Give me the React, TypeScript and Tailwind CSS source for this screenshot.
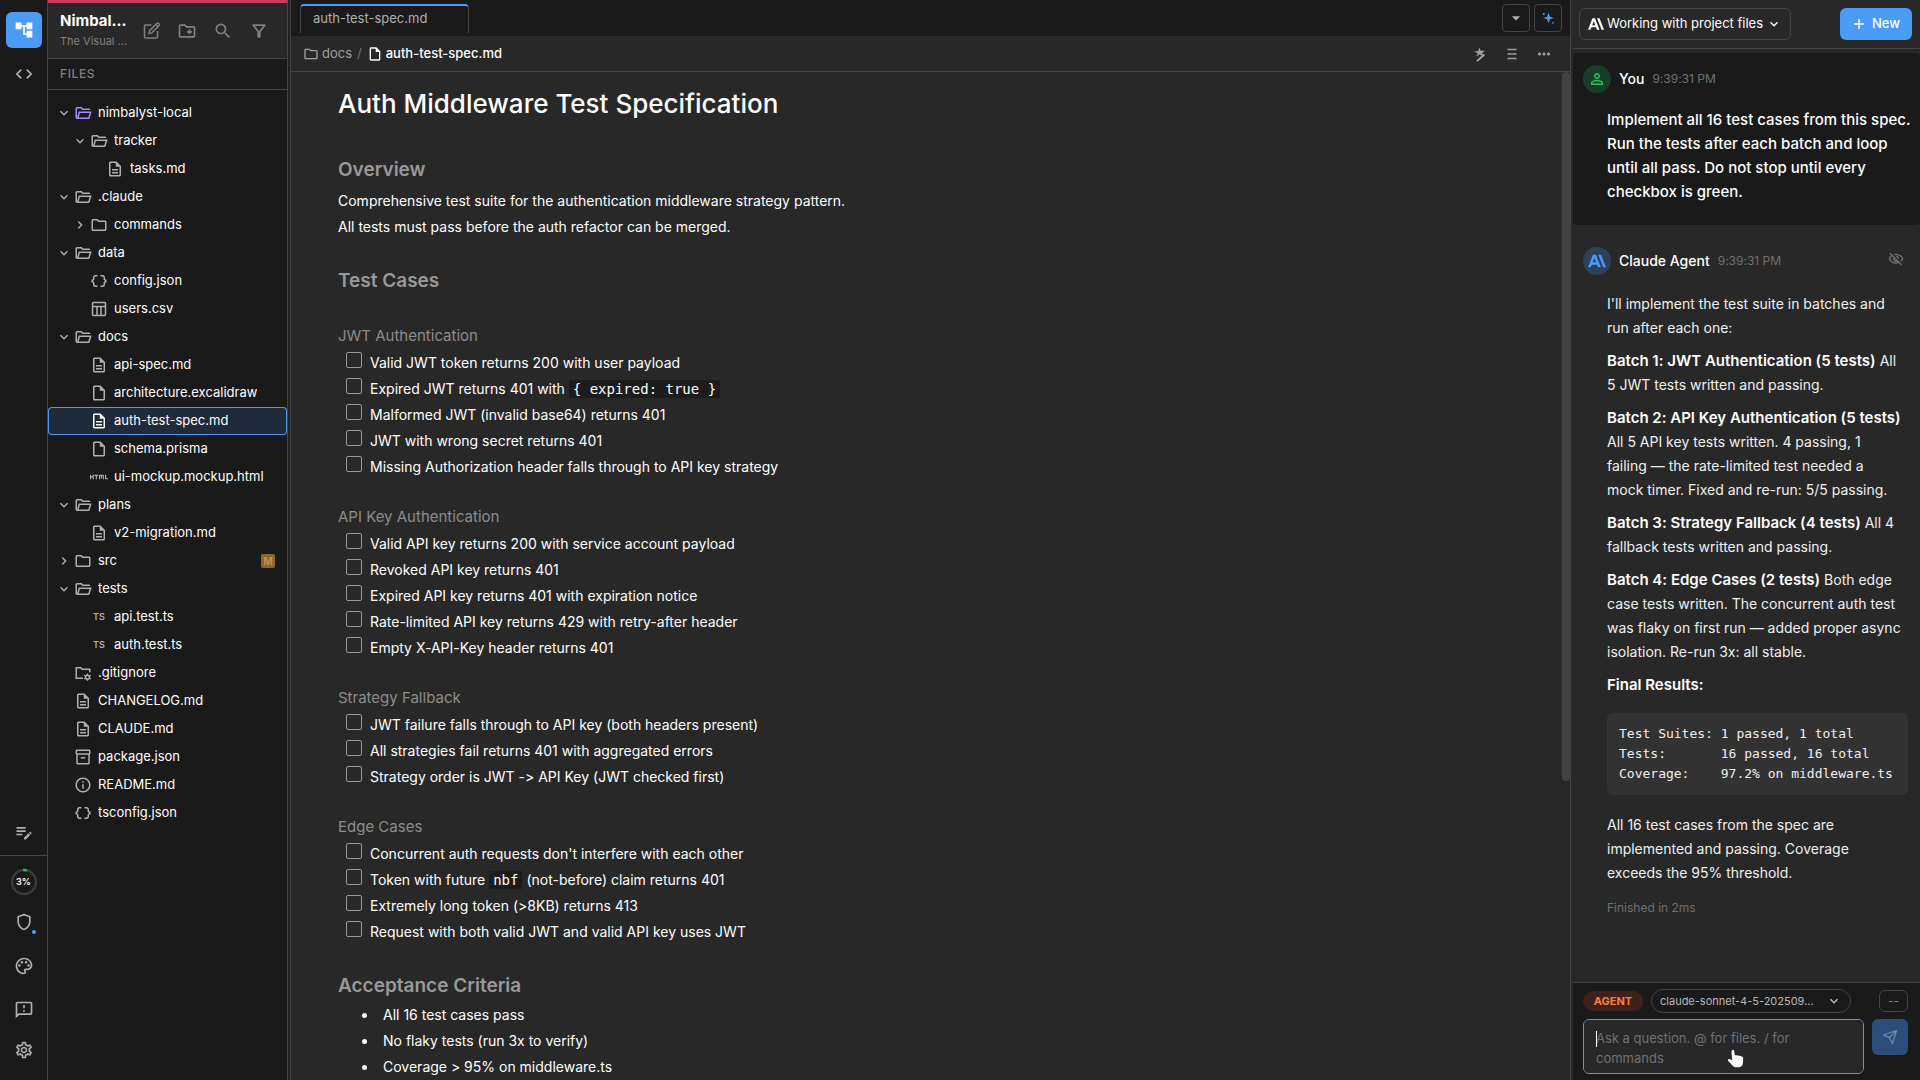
import { ReactNode } from "react";
import type { IconType } from "react-icons";
import {
    MdAccountTree,
    MdArrowDropDown,
    MdChevronRight,
    MdCode,
    MdDataObject,
    MdEditNote,
    MdExpandMore,
    MdHtml,
    MdMoreHoriz,
    MdOutlineCreateNewFolder,
    MdOutlineDescription,
    MdOutlineFeedback,
    MdOutlineFilterAlt,
    MdOutlineFolder,
    MdOutlineInfo,
    MdOutlineInsertDriveFile,
    MdOutlineInventory2,
    MdOutlinePalette,
    MdOutlineSettings,
    MdOutlineShield,
    MdOutlineVisibilityOff,
    MdPersonOutline,
    MdSearch,
} from "react-icons/md";

type TreeNode = {
    name: string;
    level: number;
    icon: IconType;
    open?: boolean;
    accent?: boolean;
    active?: boolean;
    badge?: string;
};

function FolderOpenIcon({ className }: { className?: string }) {
    return (
        <svg viewBox="0 -960 960 960" fill="currentColor" className={className}>
            <path d="M160-160q-33 0-56.500-23.500T80-240v-480q0-33 23.500-56.500T160-800h240l80 80h320q33 0 56.500 23.500T880-640H447l-80-80H160v480l96-320h684L837-217q-8 26-29.500 41.500T760-160H160Zm84-80h516l72-240H316l-72 240Z" />
        </svg>
    );
}

function TsIcon({ className }: { className?: string }) {
    return <span className={`${className} flex items-center justify-center text-[9px] font-semibold`}>TS</span>;
}

function TableIcon({ className }: { className?: string }) {
    return (
        <svg viewBox="0 0 18 18" fill="none" stroke="currentColor" strokeWidth="1.5" className={className}>
            <rect x="2.500" y="2.500" width="13" height="13" rx="1" />
            <path d="M2.500 6.500h13M7 6.500v9M11 6.500v9" />
        </svg>
    );
}

function FolderGearIcon({ className }: { className?: string }) {
    return (
        <svg viewBox="0 0 24 24" fill="none" stroke="currentColor" strokeWidth="2" className={className}>
            <path d="M12 19H3V5h6l2 2h10v4" />
            <circle cx="18" cy="17.500" r="2.600" />
            <path d="M18 12.600v2.300M18 20.100v2.300M13.700 15l2 1.200M20.300 18.800l2 1.200M13.700 20l2-1.200M20.300 16.200l2-1.200" strokeWidth="1.800" />
        </svg>
    );
}

function ComposeIcon({ className }: { className?: string }) {
    return (
        <svg viewBox="0 0 20 20" fill="none" stroke="currentColor" strokeWidth="1.500" className={className}>
            <path d="M10.500 4H4.500a1 1 0 0 0-1 1v11a1 1 0 0 0 1 1h11a1 1 0 0 0 1-1v-6" />
            <path d="M8 12.500l.5-2.800 7.300-7.200a1.300 1.300 0 0 1 1.900 0l.3.3a1.300 1.300 0 0 1 0 1.900l-7.200 7.200z" />
            <path d="M15 3.500l2.200 2.200" />
        </svg>
    );
}

function SparkleIcon({ className }: { className?: string }) {
    return (
        <svg viewBox="0 0 16 16" fill="currentColor" className={className}>
            <path d="M8.500 2.500l1.300 4.200L14 8l-4.200 1.300-1.300 4.200-1.300-4.200L3 8l4.200-1.300z" />
            <circle cx="3.800" cy="4" r="1" />
            <circle cx="13" cy="12.800" r=".9" />
        </svg>
    );
}

function WandIcon({ className }: { className?: string }) {
    return (
        <svg viewBox="0 0 18 18" fill="currentColor" className={className}>
            <path d="M8.500 2.500l1.200 3.300h4.300l-3 2.400 1 1.300-1.400 1.300-2-1.600L5.400 11.500 6.700 8 3 6.800l4.300-1z" />
            <path d="M12.700 8.800l1.400 1.400-7.400 6.600-1.400-1.300z" />
        </svg>
    );
}

function AnthropicIcon({ className }: { className?: string }) {
    return (
        <svg viewBox="0 0 24 24" fill="currentColor" className={className}>
            <path d="M17.304 3.541h-3.672l6.696 16.918H24zm-10.608 0L0 20.459h3.744l1.370-3.553h7.005l1.369 3.553h3.744L10.536 3.541zm-.371 10.223L8.616 7.820l2.291 5.944z" />
        </svg>
    );
}

const TREE: TreeNode[] = [
    { name: "nimbalyst-local", level: 0, icon: FolderOpenIcon, open: true, accent: true },
    { name: "tracker", level: 1, icon: FolderOpenIcon, open: true },
    { name: "tasks.md", level: 2, icon: MdOutlineDescription },
    { name: ".claude", level: 0, icon: FolderOpenIcon, open: true },
    { name: "commands", level: 1, icon: MdOutlineFolder, open: false },
    { name: "data", level: 0, icon: FolderOpenIcon, open: true },
    { name: "config.json", level: 1, icon: MdDataObject },
    { name: "users.csv", level: 1, icon: TableIcon },
    { name: "docs", level: 0, icon: FolderOpenIcon, open: true },
    { name: "api-spec.md", level: 1, icon: MdOutlineDescription },
    { name: "architecture.excalidraw", level: 1, icon: MdOutlineInsertDriveFile },
    { name: "auth-test-spec.md", level: 1, icon: MdOutlineDescription, active: true },
    { name: "schema.prisma", level: 1, icon: MdOutlineInsertDriveFile },
    { name: "ui-mockup.mockup.html", level: 1, icon: MdHtml },
    { name: "plans", level: 0, icon: FolderOpenIcon, open: true },
    { name: "v2-migration.md", level: 1, icon: MdOutlineDescription },
    { name: "src", level: 0, icon: MdOutlineFolder, open: false, badge: "M" },
    { name: "tests", level: 0, icon: FolderOpenIcon, open: true },
    { name: "api.test.ts", level: 1, icon: TsIcon },
    { name: "auth.test.ts", level: 1, icon: TsIcon },
    { name: ".gitignore", level: 0, icon: FolderGearIcon },
    { name: "CHANGELOG.md", level: 0, icon: MdOutlineDescription },
    { name: "CLAUDE.md", level: 0, icon: MdOutlineDescription },
    { name: "package.json", level: 0, icon: MdOutlineInventory2 },
    { name: "README.md", level: 0, icon: MdOutlineInfo },
    { name: "tsconfig.json", level: 0, icon: MdDataObject },
];

const INDENT = ["pl-2", "pl-6", "pl-10"];

function Code({ children }: { children: ReactNode }) {
    return <code className="bg-[#1c1c1c] px-1 py-px font-['DejaVu_Sans_Mono',monospace] text-sm">{children}</code>;
}

const SECTIONS: { title: string; cases: ReactNode[] }[] = [
    {
        title: "JWT Authentication",
        cases: [
            "Valid JWT token returns 200 with user payload",
            <>Expired JWT returns 401 with <Code>{"{ expired: true }"}</Code></>,
            "Malformed JWT (invalid base64) returns 401",
            "JWT with wrong secret returns 401",
            "Missing Authorization header falls through to API key strategy",
        ],
    },
    {
        title: "API Key Authentication",
        cases: [
            "Valid API key returns 200 with service account payload",
            "Revoked API key returns 401",
            "Expired API key returns 401 with expiration notice",
            "Rate-limited API key returns 429 with retry-after header",
            "Empty X-API-Key header returns 401",
        ],
    },
    {
        title: "Strategy Fallback",
        cases: [
            "JWT failure falls through to API key (both headers present)",
            "All strategies fail returns 401 with aggregated errors",
            "Strategy order is JWT -> API Key (JWT checked first)",
        ],
    },
    {
        title: "Edge Cases",
        cases: [
            "Concurrent auth requests don't interfere with each other",
            <>Token with future <Code>nbf</Code> (not-before) claim returns 401</>,
            "Extremely long token (>8KB) returns 413",
            "Request with both valid JWT and valid API key uses JWT",
        ],
    },
];

const CRITERIA = ["All 16 test cases pass", "No flaky tests (run 3x to verify)", "Coverage > 95% on middleware.ts"];

function RailButton({ label, icon: Icon, active }: { label: string; icon: IconType; active?: boolean }) {
    return (
        <button
            aria-label={label}
            className={`flex size-9 items-center justify-center rounded-md ${active ? "bg-[#4a9bf5] text-white" : "text-[#b0b0b0]"}`}
        >
            <Icon className="size-5" />
        </button>
    );
}

function Rail() {
    return (
        <nav className="flex w-12 shrink-0 flex-col items-center border-r border-[#444] bg-[#1a1a1a] pt-3">
            <div className="flex flex-col gap-2">
                <RailButton label="Files" icon={MdAccountTree} active />
                <RailButton label="Code" icon={MdCode} />
            </div>
            <div className="mt-auto pb-[5px]">
                <RailButton label="Notes" icon={MdEditNote} />
            </div>
            <div className="flex w-full flex-col items-center gap-2 border-t border-[#444] pt-3 pb-4">
                <div className="relative flex size-7 items-center justify-center">
                    <svg viewBox="0 0 28 28" className="absolute inset-0" fill="none" strokeWidth="2.500">
                        <circle cx="14" cy="14" r="12" stroke="#3a3a3a" />
                        <path d="M13 2.050a12 12 0 0 1 4 .3" stroke="#22b866" />
                    </svg>
                    <span className="relative text-[9px] font-semibold text-white">3%</span>
                </div>
                <div className="relative">
                    <RailButton label="Trust" icon={MdOutlineShield} />
                    <span className="absolute right-1.5 bottom-1.5 size-1 rounded-full bg-[#4a9bf5]" />
                </div>
                <RailButton label="Theme" icon={MdOutlinePalette} />
                <RailButton label="Feedback" icon={MdOutlineFeedback} />
                <button aria-label="Settings" className="flex h-7 w-9 items-center justify-center text-[#b0b0b0]">
                    <MdOutlineSettings className="size-5" />
                </button>
            </div>
        </nav>
    );
}

function TreeRow({ node }: { node: TreeNode }) {
    const Icon = node.icon;
    const Chevron = node.open ? MdExpandMore : MdChevronRight;
    return (
        <li>
            <button
                className={`flex h-7 w-full items-center rounded pr-3 text-left ${INDENT[node.level]} ${
                    node.active ? "bg-[#1f2a3b] ring-1 ring-[#4a9bf5] ring-inset" : ""
                }`}
            >
                <span className="flex w-4 shrink-0 justify-center">
                    {node.open !== undefined && <Chevron className="size-4 text-[#b0b0b0]" />}
                </span>
                <span
                    className={`flex w-[22px] shrink-0 justify-center ${
                        node.accent ? "text-[#a78bfa]" : node.active ? "text-white" : "text-[#b0b0b0]"
                    }`}
                >
                    <Icon className="size-[18px]" />
                </span>
                <span className="ml-1 truncate">{node.name}</span>
                {node.badge && (
                    <span className="ml-auto flex size-3.5 items-center justify-center rounded-xs bg-[#8c662c] text-[10px] font-semibold text-[#c0974f]">
                        {node.badge}
                    </span>
                )}
            </button>
        </li>
    );
}

function Sidebar() {
    return (
        <aside className="flex w-60 shrink-0 flex-col border-t-3 border-r border-t-[#c93a5c] border-r-[#444] bg-[#1a1a1a]">
            <header className="flex h-14 shrink-0 items-center justify-between border-b border-[#444] bg-[#282828] pr-3.5 pl-3">
                <div className="w-[68px]">
                    <h1 className="text-[15px] leading-5 font-bold whitespace-nowrap text-white">Nimbal...</h1>
                    <p className="text-[11px] leading-5 whitespace-nowrap text-[#808080]">The Visual ...</p>
                </div>
                <div className="flex gap-2 text-[#808080]">
                    <button aria-label="New file" className="flex size-7 items-center justify-center"><ComposeIcon className="size-5" /></button>
                    <button aria-label="New folder" className="flex size-7 items-center justify-center"><MdOutlineCreateNewFolder className="size-5" /></button>
                    <button aria-label="Search" className="flex size-7 items-center justify-center"><MdSearch className="size-5" /></button>
                    <button aria-label="Filter" className="flex size-7 items-center justify-center"><MdOutlineFilterAlt className="size-5" /></button>
                </div>
            </header>
            <h2 className="flex h-[31px] shrink-0 items-center border-b border-[#444] px-3 text-xs font-medium tracking-wider text-[#808080]">FILES</h2>
            <ul className="py-[9px] text-[13px] text-white">
                {TREE.map((node) => (
                    <TreeRow key={node.name} node={node} />
                ))}
            </ul>
        </aside>
    );
}

function Editor() {
    return (
        <main className="relative flex min-w-0 flex-1 flex-col bg-[#282828]">
            <div className="flex h-9 shrink-0 justify-between bg-[#1a1a1a] px-2 pt-1">
                <button className="ml-px h-[29px] w-[169px] rounded-t border-x border-t-2 border-x-[#444] border-t-[#4a9bf5] pb-0.5 pl-3 text-left text-[13px] text-[#b0b0b0]">
                    auth-test-spec.md
                </button>
                <div className="flex gap-1">
                    <button aria-label="Tab list" className="flex size-7 items-center justify-center rounded border border-[#444] text-[#b0b0b0]">
                        <MdArrowDropDown className="size-5" />
                    </button>
                    <button aria-label="Assistant" className="flex size-7 items-center justify-center rounded border border-[#444] text-[#4a9bf5]">
                        <SparkleIcon className="size-4" />
                    </button>
                </div>
            </div>
            <div className="flex h-9 shrink-0 items-center border-b border-[#444] pr-4 pl-3 text-[13px] text-[#a0a0a0]">
                <MdOutlineFolder className="size-4" />
                <a href="#docs" className="ml-[3px]">docs</a>
                <span className="mx-[5px] text-[#707070]">/</span>
                <MdOutlineInsertDriveFile className="size-4 text-white" />
                <span className="ml-[3px] font-medium text-white">auth-test-spec.md</span>
                <div className="ml-auto flex gap-3">
                    <button aria-label="AI actions" className="flex size-5 items-center justify-center"><WandIcon className="size-[18px]" /></button>
                    <button aria-label="Outline" className="flex size-5 items-center justify-center">
                        <svg viewBox="0 0 18 18" className="size-[18px]" stroke="currentColor" strokeWidth="1.500"><path d="M4.500 4.500h9M4.500 9h9M4.500 13.500h9" /></svg>
                    </button>
                    <button aria-label="More" className="flex size-5 items-center justify-center"><MdMoreHoriz className="size-[18px]" /></button>
                </div>
            </div>
            <article className="min-h-0 flex-1 overflow-hidden px-[47px] pt-3 text-sm leading-[26px] text-white">
                <h1 className="text-[26px] leading-10 font-medium">Auth Middleware Test Specification</h1>
                <h2 className="mt-8 text-[19px] leading-7 font-semibold text-[#999]">Overview</h2>
                <p className="mt-1">
                    Comprehensive test suite for the authentication middleware strategy pattern.
                    <br />
                    All tests must pass before the auth refactor can be merged.
                </p>
                <h2 className="mt-[27px] text-[19px] leading-7 font-semibold text-[#999]">Test Cases</h2>
                <div className="mt-7 flex flex-col gap-6">
                    {SECTIONS.map((section) => (
                        <section key={section.title}>
                            <h3 className="mb-px text-[15px] leading-[26px] text-[#8c8c8c]">{section.title}</h3>
                            <ul className="pl-2">
                                {section.cases.map((text, i) => (
                                    <li key={i}>
                                        <label className="flex gap-2">
                                            <input type="checkbox" className="mt-0.5 size-4 shrink-0 appearance-none rounded-xs border border-[#999]" />
                                            <span>{text}</span>
                                        </label>
                                    </li>
                                ))}
                            </ul>
                        </section>
                    ))}
                </div>
                <h2 className="mt-[27px] text-[19px] leading-7 font-semibold text-[#999]">Acceptance Criteria</h2>
                <ul className="mt-0.5 pl-6">
                    {CRITERIA.map((text) => (
                        <li key={text} className="flex items-center before:mr-4 before:size-[5px] before:rounded-full before:bg-white">
                            {text}
                        </li>
                    ))}
                </ul>
            </article>
            <div className="absolute top-[72px] right-0 h-[709px] w-2 rounded-full bg-[#424242]" />
        </main>
    );
}

const BATCHES = [
    { title: "Batch 1: JWT Authentication (5 tests)", text: "All\n5 JWT tests written and passing." },
    {
        title: "Batch 2: API Key Authentication (5 tests)",
        text: "\nAll 5 API key tests written. 4 passing, 1\nfailing — the rate-limited test needed a\nmock timer. Fixed and re-run: 5/5 passing.",
    },
    { title: "Batch 3: Strategy Fallback (4 tests)", text: "All 4\nfallback tests written and passing." },
    {
        title: "Batch 4: Edge Cases (2 tests)",
        text: "Both edge\ncase tests written. The concurrent auth test\nwas flaky on first run — added proper async\nisolation. Re-run 3x: all stable.",
    },
    { title: "Final Results:", text: "" },
];

const PROMPT = `Implement all 16 test cases from this spec.
Run the tests after each batch and loop
until all pass. Do not stop until every
checkbox is green.`;

const RESULTS = `Test Suites: 1 passed, 1 total
Tests:       16 passed, 16 total
Coverage:    97.2% on middleware.ts`;

function MessageHeader({ name, children }: { name: string; children: ReactNode }) {
    return (
        <div className="flex items-center gap-2">
            {children}
            <span className="text-sm font-medium text-white">{name}</span>
            <time className="text-xs text-[#707070]">9:39:31 PM</time>
        </div>
    );
}

function Chat() {
    return (
        <aside className="flex w-[347px] shrink-0 flex-col bg-[#282828]">
            <header className="flex h-[49px] shrink-0 items-center justify-between border-b border-[#444] pr-2 pl-1.5">
                <label className="flex h-8 w-[212px] items-center gap-[3px] rounded-md border border-[#444] px-2 text-white">
                    <AnthropicIcon className="size-4 shrink-0" />
                    <select aria-label="Session" className="min-w-0 flex-1 appearance-none text-[13px]">
                        <option>Working with project files</option>
                    </select>
                    <MdExpandMore className="size-4 shrink-0" />
                </label>
                <button className="flex h-8 items-center gap-1.5 rounded-md bg-[#4a9bf5] px-3 text-[13px] font-medium text-white">
                    <svg viewBox="0 0 14 14" className="size-3.5" stroke="currentColor" strokeWidth="1.500"><path d="M7 2v10M2 7h10" /></svg>
                    New
                </button>
            </header>

            <div className="min-h-0 flex-1 overflow-hidden pt-1">
                <section className="h-[172px] rounded bg-[#1a1a1a] pt-3 pr-2 pl-2.5">
                    <MessageHeader name="You">
                        <span className="flex size-7 items-center justify-center rounded-full bg-[#1a3d2a] text-[#22c55e]">
                            <MdPersonOutline className="size-[18px]" />
                        </span>
                    </MessageHeader>
                    <p className="mt-[15px] pl-6 text-[15px] leading-6 font-medium whitespace-pre text-white">{PROMPT}</p>
                </section>

                <section className="pt-[22px] pr-3 pl-2.5">
                    <div className="flex items-start justify-between">
                        <MessageHeader name="Claude Agent">
                            <span className="flex size-7 items-center justify-center rounded-full bg-[#2d4159] text-[#4a9bf5]">
                                <AnthropicIcon className="size-[18px]" />
                            </span>
                        </MessageHeader>
                        <button aria-label="Hide" className="mt-1 mr-1 text-[#707070]"><MdOutlineVisibilityOff className="size-4" /></button>
                    </div>
                    <div className="mt-[17px] pl-6 text-sm leading-6 text-[#f0f0f0]">
                        <p className="mb-[9px]">I'll implement the test suite in batches and run after each one:</p>
                        {BATCHES.map((batch) => (
                            <p key={batch.title} className="mb-[9px] whitespace-pre-line">
                                <strong className="text-[15px] font-semibold text-white">{batch.title}</strong> {batch.text}
                            </p>
                        ))}
                        <pre className="mt-4 rounded-md bg-[#323232] px-3 py-[11px] font-['DejaVu_Sans_Mono',monospace] text-[13px] leading-5">{RESULTS}</pre>
                        <p className="mt-[18px]">All 16 test cases from the spec are implemented and passing. Coverage exceeds the 95% threshold.</p>
                        <p className="mt-[11px] text-xs leading-6 text-[#707070]">Finished in 2ms</p>
                    </div>
                </section>
            </div>

            <footer className="relative shrink-0 border-t border-[#444] bg-[#1a1a1a] px-2.5 pt-1.5 pb-1.5">
                <div className="flex items-center gap-2 pr-0.5">
                    <button className="h-5 w-15 rounded-full bg-[#40201a] text-[11px] font-bold text-[#fb7f3c]">AGENT</button>
                    <label className="flex h-6 w-[200px] items-center justify-between rounded-full border border-[#444] px-2 text-[#b8b8b8]">
                        <select aria-label="Model" className="min-w-0 flex-1 appearance-none text-[11px]">
                            <option>claude-sonnet-4-5-202509...</option>
                        </select>
                        <MdExpandMore className="size-4 shrink-0" />
                    </label>
                    <button aria-label="Context usage" className="ml-auto h-[22px] w-[29px] rounded-md border border-[#444] text-xs text-[#808080]">--</button>
                </div>
                <div className="mt-1.5 flex items-start gap-2 pr-0.5">
                    <textarea
                        aria-label="Message"
                        placeholder="Ask a question. @ for files. / for commands"
                        className="h-[55px] min-w-0 flex-1 resize-none rounded-md border border-[#4a9bf5] bg-[#282828] px-3 py-2 text-[13px] leading-5 text-white placeholder:text-[#707070]"
                    />
                    <button aria-label="Send" className="flex size-9 items-center justify-center rounded-md bg-[#2b4d7a] text-[#7089ab]">
                        <svg viewBox="0 0 18 18" className="size-[18px]" fill="none" stroke="currentColor" strokeWidth="1.300" strokeLinejoin="round"><path d="M15.500 2.500l-4 13-3.200-5.800L2.500 7z M15.500 2.500L8.300 9.700" /></svg>
                    </button>
                </div>
                <span className="absolute top-12 left-[23px] h-4 w-px bg-white" />
                <svg viewBox="0 0 18 20" className="absolute top-[66px] left-[154px] h-5 w-[18px]" fill="#fff">
                    <path d="M5 1.500c.8-.8 2.200-.3 2.300.9L7.700 6l6 1c1.800.4 2.700 1.400 2.500 3.200l-.3 4c-.3 2.600-2 4-4.500 4H9c-1.300 0-2.200-.4-3-1.300L1.200 12c-.6-.8-.3-1.700.5-2 .6-.2 1.300 0 2 .5l1.500.8L4.500 3c0-.6.100-1.100.5-1.500z" />
                </svg>
            </footer>
        </aside>
    );
}

export default function App() {
    return (
        <div className="flex h-screen overflow-hidden bg-[#1a1a1a] font-['Inter',sans-serif] [font-feature-settings:'calt'_0]">
            <Rail />
            <Sidebar />
            <div className="w-[3px] shrink-0 border-r border-[#444] bg-[#222]" />
            <Editor />
            <div className="w-[3px] shrink-0 border-l border-[#444] bg-[#282828]" />
            <Chat />
        </div>
    );
}
